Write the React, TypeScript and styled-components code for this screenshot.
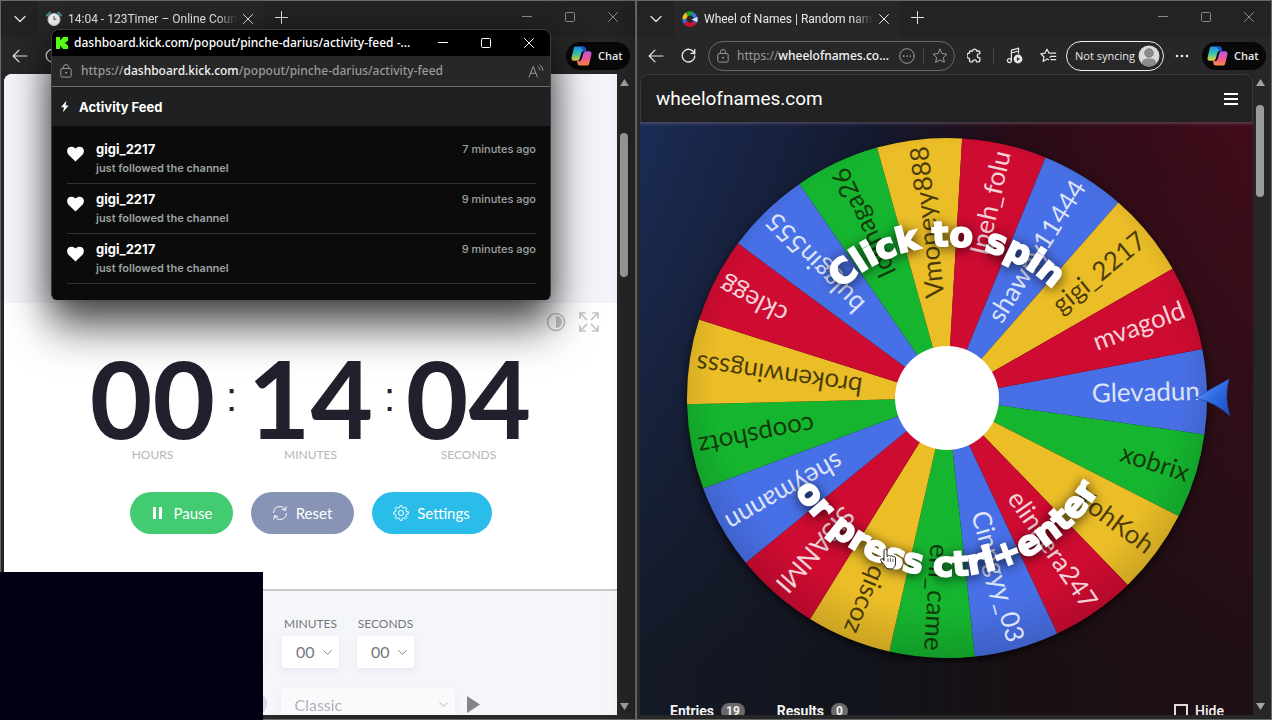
import React from 'react';
import styled, { createGlobalStyle, css } from 'styled-components';

const UI = `"Open Sans", "Noto Sans", sans-serif`;
const WIDE = `"Noto Sans", "Open Sans", sans-serif`;
const ROUND = `Lato, "Open Sans", sans-serif`;

const Global = createGlobalStyle`
  *, *::before, *::after { box-sizing: border-box; }
  html, body, #root { height: 100%; }
  body { margin: 0; overflow: hidden; background: #1b1b1b; font-family: ${UI}; }
  button, input, select { font: inherit; color: inherit; }
  button { border: 0; padding: 0; background: none; cursor: pointer; }
  h1, h2, p, ul { margin: 0; padding: 0; }
  svg { display: block; flex: none; }
`;

/* ---------- desktop and browser windows ---------- */

const Desktop = styled.main`
  position: relative;
  display: grid;
  grid-template-columns: 1fr 1fr;
  height: 100vh;
  overflow: hidden;
`;

const Window = styled.section`
  position: relative;
  display: flex;
  flex-direction: column;
  min-width: 0;
  min-height: 0;
  padding: 0 4px 4px 3px;
  border: 1px solid #666b69;
  background: #272727;
  box-shadow: 0 0 24px rgba(0, 0, 0, 0.35);
  color: #e8e8e8;
`;

const TabStrip = styled.header`
  display: flex;
  flex: none;
  height: 36px;
  margin: 0 -3px;
  background: #232323;
`;

const TabMenu = styled.button`
  display: grid;
  place-items: center;
  width: 37px;
`;

const Tab = styled.div`
  display: flex;
  align-items: center;
  gap: 6px;
  width: 225px;
  padding: 0 10px 0 8px;
  background: #272727;
  font: 400 12px/16px Roboto, sans-serif;
`;

const TabTitle = styled.span`
  flex: 1;
  overflow: hidden;
  white-space: nowrap;
  mask-image: linear-gradient(to right, #000 88%, transparent);
`;

const IconButton = styled.button<{ $w?: number }>`
  display: grid;
  place-items: center;
  flex: none;
  width: ${(p) => p.$w ?? 32}px;
  height: 32px;
`;

const WindowButtons = styled.div<{ $bright?: boolean }>`
  display: flex;
  margin-left: auto;
  color: ${(p) => (p.$bright ? '#ffffff' : '#8b8b8b')};
`;

const Toolbar = styled.nav`
  display: flex;
  align-items: center;
  flex: none;
  height: 37px;
  padding-right: 1px;
`;

const Address = styled.div`
  display: flex;
  align-items: center;
  flex: 1;
  gap: 8px;
  min-width: 0;
  height: 30px;
  margin: 0 4px;
  padding: 0 6px 0 8px;
  border: 1px solid #6a6a6a;
  border-radius: 15px;
  color: #9a9a9a;
  font: 400 12px/18px ${WIDE};
`;

const Url = styled.span`
  flex: 1;
  overflow: hidden;
  white-space: nowrap;
  b { color: #f4f4f4; font-weight: 500; }
`;

const Divider = styled.span<{ $gap?: number }>`
  width: 1px;
  height: 16px;
  margin: 0 ${(p) => p.$gap ?? 0}px;
  background: #484848;
`;

const Spacer = styled.span`
  flex: 1;
`;

const SyncButton = styled.button`
  display: flex;
  align-items: center;
  justify-content: space-between;
  width: 98px;
  height: 30px;
  margin: 0 2px;
  padding: 0 3px 0 8px;
  border: 1px solid #f0f0f0;
  border-radius: 15px;
  font-size: 11px;
  font-weight: 500;
  white-space: nowrap;
`;

const ChatButton = styled.button`
  display: flex;
  align-items: center;
  gap: 6px;
  width: 64px;
  height: 28px;
  margin-left: 4px;
  padding-left: 5px;
  border-radius: 14px;
  background: #080808;
  font-size: 11px;
  font-weight: 600;
`;

const Page = styled.div`
  display: flex;
  flex: 1;
  min-height: 0;
  border-radius: 8px 8px 0 0;
  overflow: hidden;
`;

const View = styled.div<{ $light?: boolean }>`
  flex: 1;
  min-width: 0;
  overflow: hidden;
  background: ${(p) => (p.$light ? '#f4f6fa' : '#222222')};
`;

const ScrollTrack = styled.div`
  display: flex;
  flex-direction: column;
  align-items: center;
  flex: none;
  width: 14px;
  padding: 5px 0;
  background: #262626;
`;

const ScrollThumb = styled.div<{ $before: number; $size: number }>`
  width: 8px;
  height: ${(p) => p.$size}px;
  margin-top: ${(p) => p.$before}px;
  margin-bottom: auto;
  border-radius: 4px;
  background: #9c9c9c;
`;

/* ---------- countdown page ---------- */

const Banner = styled.div`
  height: 229px;
  background: #f4f5fa;
`;

const Card = styled.section`
  padding: 8px 0 55px;
  background: #ffffff;
  border-bottom: 2px solid #c9ccd0;
  font-family: ${ROUND};
`;

const CardTools = styled.div`
  display: flex;
  justify-content: flex-end;
  gap: 12px;
  padding-right: 18px;
  color: #c4c4c8;
`;

const ToolButton = styled.button`
  display: grid;
  place-items: center;
  width: 21px;
  height: 21px;
`;

const Clock = styled.div`
  display: grid;
  grid-template-columns: 130px 28px 130px 28px 130px;
  justify-content: center;
  margin-top: 22px;
`;

const Unit = styled.div`
  display: flex;
  flex-direction: column;
  align-items: center;
  gap: 7px;
`;

const Digits = styled.span`
  color: #23202e;
  font-size: 108px;
  font-weight: 700;
  line-height: 86px;
`;

const UnitName = styled.span`
  color: #b5b5b8;
  font-size: 12px;
  line-height: 16px;
`;

const Colon = styled.span`
  color: #23202e;
  font-family: "Liberation Sans", sans-serif;
  font-size: 40px;
  line-height: 86px;
  text-align: center;
`;

const Actions = styled.div`
  display: flex;
  justify-content: center;
  gap: 18px;
  margin-top: 29px;
`;

const Pill = styled.button<{ $bg: string; $wide?: boolean }>`
  display: flex;
  align-items: center;
  justify-content: center;
  gap: 8px;
  width: ${(p) => (p.$wide ? 120 : 103)}px;
  height: 42px;
  border-radius: 21px;
  background: ${(p) => p.$bg};
  color: #ffffff;
  font-size: 15px;
`;

const Options = styled.form`
  display: flex;
  flex-direction: column;
  align-items: center;
  gap: 20px;
  padding-top: 25px;
  color: #77777c;
  font-family: ${ROUND};
`;

const Fields = styled.div`
  display: flex;
  gap: 18px;
`;

const Field = styled.label`
  display: flex;
  flex-direction: column;
  align-items: center;
  gap: 4px;
  width: 57px;
  font-size: 12px;
  line-height: 16px;
`;

const SelectBox = styled.span<{ $faded?: boolean }>`
  display: grid;
  align-items: center;
  width: 100%;
  height: 32px;
  border-radius: 4px;
  background: #ffffff;
  box-shadow: 0 2px 8px rgba(30, 40, 80, 0.07);
  opacity: ${(p) => (p.$faded ? 0.55 : 1)};
  select, svg { grid-area: 1 / 1; }
  select {
    width: 100%;
    height: 32px;
    padding: 0 0 0 14px;
    border: 0;
    appearance: none;
    background: transparent;
    font-size: 16px;
  }
  svg { justify-self: end; margin-right: 7px; pointer-events: none; }
`;

const SoundRow = styled.div`
  display: flex;
  align-items: center;
  gap: 12px;
  width: 338px;
`;

const SoundToggle = styled.input`
  flex: none;
  width: 24px;
  height: 24px;
  margin: 0 2px 0 auto;
  border-radius: 50%;
  appearance: none;
  background: #d9d9ea;
`;

const SoundChoice = styled.div`
  width: 174px;
`;

/* ---------- activity pop-up ---------- */

const Popup = styled.section`
  position: absolute;
  top: 29px;
  left: 51px;
  z-index: 2;
  width: 500px;
  height: 271px;
  border: 1px solid #3c3c3c;
  border-bottom-color: #0b0b0b;
  border-radius: 8px 8px 6px 6px;
  overflow: hidden;
  background: #0b0b0b;
  box-shadow: 0 28px 44px rgba(0, 0, 0, 0.6), 0 6px 32px rgba(0, 0, 0, 0.4);
  color: #ffffff;
`;

const bar = css`
  display: flex;
  align-items: center;
`;

const PopupTitle = styled.header`
  ${bar}
  height: 26px;
  padding-left: 4px;
  gap: 6px;
  background: #000000;
  font: 500 12px/18px ${WIDE};
  white-space: nowrap;
`;

const PopupAddress = styled.div`
  ${bar}
  gap: 9px;
  height: 31px;
  padding: 0 6px 0 8px;
  border-bottom: 1px solid #6b6b6b;
  background: #272727;
  color: #9a9a9a;
  font: 500 12px/18px ${WIDE};
`;

const FeedTitle = styled.h2`
  ${bar}
  gap: 9px;
  height: 39px;
  padding-left: 8px;
  background: #1e2021;
  font: 700 13px/16px Inter, sans-serif;
`;

const Feed = styled.ul`
  padding: 8px 14px 8px 15px;
  list-style: none;
  font-family: Inter, sans-serif;
`;

const FeedItem = styled.li`
  display: grid;
  grid-template-columns: 17px 1fr auto;
  column-gap: 12px;
  height: 50px;
  padding-top: 6px;
  border-bottom: 1px solid #303234;
  svg { margin-top: 6px; }
`;

const Name = styled.strong`
  display: block;
  font-size: 13px;
  line-height: 18px;
`;

const Note = styled.span`
  display: block;
  color: #9da3a3;
  font-size: 11px;
  font-weight: 600;
  line-height: 20px;
`;

const Time = styled.time`
  color: #9da3a3;
  font-size: 11px;
  font-weight: 500;
  line-height: 18px;
`;

const CameraCover = styled.div`
  position: absolute;
  left: 0;
  bottom: 0;
  z-index: 3;
  width: 263px;
  height: 148px;
  background: #020012;
`;

/* ---------- wheel page ---------- */

const SiteBar = styled.header`
  display: flex;
  align-items: center;
  justify-content: space-between;
  height: 48px;
  padding: 0 14px 0 15px;
  border: 1px solid #3a3a3a;
  border-bottom: 0;
  border-radius: 8px 8px 0 0;
  background: #222222;
  font-family: Roboto, sans-serif;
  h1 { font-size: 19px; font-weight: 400; color: #ffffff; }
`;

const Stage = styled.section`
  display: flex;
  flex-direction: column;
  align-items: center;
  min-height: 640px;
  padding-top: 11px;
  background:
    linear-gradient(to bottom, rgba(130, 110, 130, 0.45), transparent 4px),
    linear-gradient(to bottom, transparent, rgba(17, 17, 18, 0.7) 85%),
    linear-gradient(to right, #1b2c56, #14182c 40%, #2a0c16 62%, #420b1a);
`;

const Tabs = styled.div`
  display: flex;
  align-items: center;
  align-self: stretch;
  gap: 32px;
  margin-top: 38px;
  padding: 0 29px 0 30px;
  color: #f2f2f2;
  font: 700 14px/20px Roboto, sans-serif;
`;

const TabLink = styled.button`
  display: flex;
  align-items: center;
  gap: 7px;
`;

const Count = styled.span`
  min-width: 17px;
  padding: 0 5px;
  border-radius: 8px;
  background: #6a6a6a;
  font-size: 12px;
  line-height: 16px;
`;

const HideBox = styled.label`
  display: flex;
  align-items: center;
  gap: 7px;
  margin-left: auto;
  font-weight: 500;
  input {
    width: 14px;
    height: 14px;
    margin: 0;
    border: 2px solid #dddddd;
    appearance: none;
  }
`;

const Label = styled.text<{ $dark: boolean }>`
  fill: ${(p) => (p.$dark ? 'rgba(20, 18, 0, 0.75)' : 'rgba(255, 255, 255, 0.82)')};
  font: 400 26px ${ROUND};
  text-anchor: end;
`;

const Prompt = styled.text`
  fill: #ffffff;
  stroke: #ffffff;
  stroke-width: 2px;
  font: 700 34px "DejaVu Sans", sans-serif;
  text-anchor: middle;
  filter: drop-shadow(0 2px 6px rgba(0, 0, 0, 0.75));
`;

/* ---------- icons ---------- */

const stroke = { fill: 'none', stroke: 'currentColor', strokeLinecap: 'round', strokeLinejoin: 'round' } as const;

const Chevron = ({ size = 12 }: { size?: number }) => (
  <svg width={size} height={size} viewBox="0 0 12 12" {...stroke} strokeWidth="1.2"><path d="M1 3.5l5 5 5-5" /></svg>
);
const Cross = () => (
  <svg width="10" height="10" viewBox="0 0 10 10" {...stroke}><path d="M.5.5l9 9M9.5.5l-9 9" /></svg>
);
const Plus = () => (
  <svg width="13" height="13" viewBox="0 0 13 13" {...stroke}><path d="M6.5.5v12M.5 6.5h12" /></svg>
);
const Dash = () => (
  <svg width="10" height="10" viewBox="0 0 10 10" {...stroke}><path d="M0 4.5h10" /></svg>
);
const Square = () => (
  <svg width="10" height="10" viewBox="0 0 10 10" {...stroke}><rect x=".5" y=".5" width="9" height="9" rx="1" /></svg>
);
const Back = () => (
  <svg width="16" height="14" viewBox="0 0 16 14" {...stroke} strokeWidth="1.2"><path d="M15 7H1.5M7 1.2L1.2 7 7 12.8" /></svg>
);
const Reload = () => (
  <svg width="15" height="15" viewBox="0 0 15 15" {...stroke} strokeWidth="1.3"><path d="M13.6 6A6.3 6.3 0 1 0 13.8 8M13.8 1.5V5.4H10" /></svg>
);
const Lock = () => (
  <svg width="12" height="14" viewBox="0 0 12 14" {...stroke}>
    <rect x=".8" y="4.5" width="10.4" height="8.6" rx="1.5" /><path d="M3.4 4.5V3.2a2.6 2.6 0 0 1 5.2 0v1.3" /><circle cx="6" cy="8.8" r=".6" />
  </svg>
);
const DotsCircle = () => (
  <svg width="16" height="16" viewBox="0 0 16 16" {...stroke}>
    <circle cx="8" cy="8" r="7.3" /><path d="M4.6 8h.1M8 8h.1M11.3 8h.1" strokeWidth="1.7" />
  </svg>
);
const Star = () => (
  <svg width="16" height="16" viewBox="0 0 16 16" {...stroke}><path d="M8 1.2l2.1 4.4 4.8.6-3.5 3.3.9 4.8L8 12l-4.3 2.3.9-4.8L1.1 6.2l4.800-.6z" /></svg>
);
const Puzzle = () => (
  <svg width="16" height="16" viewBox="0 0 16 16" {...stroke} strokeWidth="1.3">
    <path d="M3.500 3h2.200a1.900 1.900 0 0 1 3.800 0h2.300a1 1 0 0 1 1 1v1.700h-.4a2 2 0 0 0 0 4.100h.4v3a1 1 0 0 1-1 1H9.500a1.900 1.900 0 0 0-3.800 0H3.500a1 1 0 0 1-1-1v-2.400a1.900 1.900 0 0 1 0-5.200V4a1 1 0 0 1 1-1z" />
  </svg>
);
const Music = () => (
  <svg width="17" height="17" viewBox="0 0 17 17" {...stroke} strokeWidth="1.2">
    <path d="M5.4 13.4V3.2L12.6 1.2v5M5.4 6l7.2-2" /><circle cx="3.4" cy="13.6" r="2" />
    <circle cx="12" cy="12" r="4.4" fill="currentColor" stroke="none" /><path d="M10.9 10v4l3.1-2z" fill="#272727" stroke="none" />
  </svg>
);
const Favorites = () => (
  <svg width="17" height="16" viewBox="0 0 17 16" {...stroke} strokeWidth="1.2">
    <path d="M8.600 11.800L7 11l-3.900 2.400.8-4.600L.8 5.800l4.200-.6L7 1.200l2 4h6.700M11 8.400h4.700M11 11.600h4.700M11 8.400l-1 .9" />
  </svg>
);
const Avatar = () => (
  <svg width="22" height="22" viewBox="0 0 22 22">
    <circle cx="11" cy="11" r="10.5" fill="#d8d8d8" /><circle cx="11" cy="8" r="4.2" fill="#8c8c8c" stroke="#777" />
    <path d="M3.6 18.4C4 14.6 6.6 13.4 11 13.4s7 1.2 7.4 5A10.5 10.5 0 0 1 3.6 18.4z" fill="#8c8c8c" />
  </svg>
);
const Dots = () => (
  <svg width="14" height="4" viewBox="0 0 14 4" fill="currentColor"><circle cx="2" cy="2" r="1.3" /><circle cx="7" cy="2" r="1.3" /><circle cx="12" cy="2" r="1.3" /></svg>
);
const Copilot = () => (
  <svg width="21" height="20" viewBox="0 0 21 20">
    <defs>
      <linearGradient id="cpA" x1="0" y1="0" x2="0" y2="1"><stop offset="0" stopColor="#1f8fe8" /><stop offset=".5" stopColor="#33c4b4" /><stop offset="1" stopColor="#f0d02c" /></linearGradient>
      <linearGradient id="cpB" x1="0" y1="0" x2="0" y2="1"><stop offset="0" stopColor="#b45ae8" /><stop offset=".5" stopColor="#f0569c" /><stop offset="1" stopColor="#fb8a3c" /></linearGradient>
    </defs>
    <path d="M4.6.6h7.6c1.4 0 2 .8 2.3 2L15 5h-2.2c-1.4 0-2 .7-2.4 2l-1.7 5.8c-.4 1.2-1.2 1.9-2.5 1.9H2.8c-1.8 0-2.7-1.3-2.2-3.2l2-8.6C2.900 1.400 3.600.6 4.6.6z" fill="url(#cpA)" />
    <path d="M9.400.6h2.800c1.400 0 2 .8 2.300 2L15 5h-2.400z" fill="#1b50d8" />
    <path d="M16.400 19.400H8.800c-1.400 0-2-.8-2.300-2L6 15h2.200c1.400 0 2-.7 2.400-2l1.700-5.800c.4-1.200 1.200-1.900 2.500-1.900h3.400c1.800 0 2.700 1.300 2.200 3.200l-2 8.600c-.3 1.500-1 2.300-2 2.300z" fill="url(#cpB)" />
  </svg>
);
const AlarmClock = () => (
  <svg width="16" height="16" viewBox="0 0 16 16">
    <path d="M1 4.500L4 1.500M15 4.500L12 1.500" stroke="#3f8fa0" strokeWidth="2" strokeLinecap="round" />
    <circle cx="8" cy="8.600" r="6" fill="#f2f2f2" stroke="#c9c9c9" /><path d="M8 5v3.800l2.300-1" stroke="#555" fill="none" />
  </svg>
);
const MiniWheel = () => (
  <svg width="16" height="16" viewBox="0 0 16 16" fill="none" strokeWidth="4">
    <path d="M2.400 8A5.600 5.600 0 0 1 5 3.300" stroke="#eebf22" /><path d="M5 3.300A5.600 5.600 0 0 1 10.500 3" stroke="#18a82f" />
    <path d="M10.500 3A5.600 5.600 0 0 1 12.500 11.500" stroke="#3f6fe6" /><path d="M12.500 11.500A5.600 5.600 0 0 1 3.500 11.500" stroke="#d3102c" />
    <path d="M3.500 11.500A5.600 5.600 0 0 1 2.400 8" stroke="#3f6fe6" /><path d="M9.500 8.500l6-2.500v5z" fill="#dfe6fa" />
  </svg>
);
const KickLogo = () => (
  <svg width="12" height="12" viewBox="0 0 12 12"><path d="M0 0h4v2.700h1.300V1.300h1.400V0H12v4h-1.300v1.300H9.300v1.400h1.400V8H12v4H6.700v-1.300H5.300V9.300H4V12H0z" fill="#53fc18" /></svg>
);
const ReadAloud = () => (
  <svg width="16" height="15" viewBox="0 0 16 15" {...stroke}><path d="M1 13L5.200 2.500 9.400 13M2.500 9.300h5.400M10 2.500a4 4 0 0 1 2 3.500M12 .800a6.500 6.500 0 0 1 3 5.400" /></svg>
);
const Bolt = () => (
  <svg width="10" height="13" viewBox="0 0 10 13"><path d="M6.400.8L1 7.200h3L3 12.200l5.600-6.600H5.600z" fill="#fff" /></svg>
);
const Heart = () => (
  <svg width="17" height="16" viewBox="0 0 17 16"><path d="M8.500 15.600L1.300 8.400C-.3 6.600-.2 3.400 1.400 1.800 3.200.2 6.300.1 8.500 2.600 10.700.1 13.800.2 15.600 1.800c1.600 1.600 1.700 4.800.1 6.600z" fill="#fff" /></svg>
);
const Contrast = () => (
  <svg width="20" height="20" viewBox="0 0 20 20"><circle cx="10" cy="10" r="8.500" fill="none" stroke="currentColor" strokeWidth="1.600" /><path d="M10 4a6 6 0 0 1 0 12z" fill="currentColor" /></svg>
);
const Expand = () => (
  <svg width="20" height="20" viewBox="0 0 20 20" {...stroke} strokeWidth="1.700"><path d="M1 6V1h5M1 1l6.500 6.500M14 1h5v5M19 1l-6.500 6.500M19 14v5h-5M19 19l-6.500-6.500M6 19H1v-5M1 19l6.500-6.500" /></svg>
);
const PauseBars = () => (
  <svg width="16" height="12" viewBox="0 0 16 12" fill="#fff"><rect x="3" width="3" height="12" /><rect x="9" width="3" height="12" /></svg>
);
const Cycle = () => (
  <svg width="16" height="16" viewBox="0 0 16 16" {...stroke}><path d="M1.500 7.500A6.300 6.300 0 0 1 13.400 5M14.200 1.800L13.600 5.200 10.300 4.600M14.500 8.500A6.300 6.300 0 0 1 2.600 11M1.800 14.200l.6-3.400 3.300.6" /></svg>
);
const teeth = Array.from({ length: 16 }, (_, i) => {
  const r = i % 2 ? 5.6 : 7.4;
  return [-0.13, 0.13].map((d) => {
    const a = (i * Math.PI) / 8 + d;
    return `${(8 + r * Math.cos(a)).toFixed(2)} ${(8 + r * Math.sin(a)).toFixed(2)}`;
  }).join('L');
}).join('L');
const Gear = () => (
  <svg width="16" height="16" viewBox="0 0 16 16" {...stroke}><path d={`M${teeth}z`} /><circle cx="8" cy="8" r="2.600" /></svg>
);
const Play = () => (
  <svg width="13" height="17" viewBox="0 0 13 17"><path d="M0 0l13 8.500L0 17z" fill="#85858a" /></svg>
);
const ScrollArrow = ({ down }: { down?: boolean }) => (
  <svg width="9" height="7" viewBox="0 0 9 7"><path d={down ? 'M0 0h9L4.500 7z' : 'M0 7h9L4.500 0z'} fill="#a3a3a3" /></svg>
);
const MenuBars = () => (
  <svg width="14" height="12" viewBox="0 0 14 12" fill="#fff"><rect width="14" height="2" /><rect y="5" width="14" height="2" /><rect y="10" width="14" height="2" /></svg>
);

/* ---------- wheel ---------- */

const BLUE = '#4870e6';
const GREEN = '#15b52f';
const YELLOW = '#ebbd27';
const RED = '#ce0b31';
const cycle = [BLUE, GREEN, YELLOW, RED];
const names = [
  'Glevadun', 'xobrix', 'KohKoh', 'elinbera247', 'Cinngyy_03', 'eni_came', 'qiscoz', 'SISANMI', 'sheymannn', 'coopshotz',
  'brokenwingsss', 'cklegg', 'bulggin555', 'lolinaga26', 'Vmoneyy888', 'Ipeh_folu', 'shawny11444', 'gigi_2217', 'mvagold',
];
const colourOf = (i: number) => (i === 17 ? YELLOW : i === 18 ? RED : cycle[i % 4]);
const STEP = 360 / names.length;
const START = -1.4;
const R = 260;

const point = (deg: number) => {
  const a = (deg * Math.PI) / 180;
  return `${(R * Math.cos(a)).toFixed(2)} ${(R * Math.sin(a)).toFixed(2)}`;
};

const Rim = styled.circle`
  filter: drop-shadow(0 3px 4px rgba(0, 0, 0, 0.7));
`;

const Wheel = () => (
  <svg width="580" height="530" viewBox="-290 -265 580 530" role="img" aria-label="Wheel of names">
    <defs>
      <radialGradient id="shade" gradientUnits="userSpaceOnUse" cx="0" cy="-20" r="290">
        <stop offset=".8" stopColor="#000" stopOpacity="0" /><stop offset="1" stopColor="#000" stopOpacity=".17" />
      </radialGradient>
      <linearGradient id="pointer" x1="0" y1="0" x2="1" y2="1"><stop offset="0" stopColor="#6fa2ff" /><stop offset=".5" stopColor="#2f6be4" /><stop offset="1" stopColor="#1b49bd" /></linearGradient>
      <path id="arcTop" d="M-152 0A152 152 0 0 1 152 0" />
      <path id="arcBottom" d="M-178 0A178 178 0 0 0 178 0" />
    </defs>
    <Rim r="260" fill="#111" />
    {names.map((name, i) => {
      const mid = START + i * STEP;
      return <path key={name} d={`M0 0L${point(mid - STEP / 2)}A${R} ${R} 0 0 1 ${point(mid + STEP / 2)}z`} fill={colourOf(i)} />;
    })}
    <circle r="260" fill="url(#shade)" />
    {names.map((name, i) => {
      const c = colourOf(i);
      return (
        <g key={name} transform={`rotate(${START + i * STEP})`}>
          <Label x="253" y="8" $dark={c === GREEN || c === YELLOW}>{name}</Label>
        </g>
      );
    })}
    <circle r="52" fill="#fff" />
    <Prompt><textPath href="#arcTop" startOffset="50%">Click to spin</textPath></Prompt>
    <Prompt><textPath href="#arcBottom" startOffset="50%">or press ctrl+enter</textPath></Prompt>
    <path d="M248 0L282 -19Q277 0 283 18Q268 4 248 0z" fill="url(#pointer)" stroke="#1c3f9c" strokeWidth=".6" />
    <g transform="translate(-67 151)">
      <path d="M4 1.500c0-1.800 3-1.800 3 0v6l1-.3c.5-1.300 2.300-1 2.600.2.700-1 2.300-.8 2.600.5.900-.7 2.300-.2 2.300 1.200v4.500c0 4-1.500 6.400-5.400 6.400-3.200 0-4.400-1.300-5.800-4L.7 11.500c-.7-1.500 1-2.600 2.100-1.300L4 11.600z" fill="#fff" stroke="#222" strokeWidth="1" />
      <path d="M8 9v4M10.500 9v4M13 10v3" stroke="#222" strokeWidth=".7" />
    </g>
  </svg>
);

/* ---------- assembled parts ---------- */

const Controls = ({ bright }: { bright?: boolean }) => (
  <WindowButtons $bright={bright}>
    <IconButton $w={43} aria-label="Minimize"><Dash /></IconButton>
    <IconButton $w={43} aria-label="Maximize"><Square /></IconButton>
    <IconButton $w={43} aria-label="Close"><Cross /></IconButton>
  </WindowButtons>
);

const Strip = ({ icon, title }: { icon: React.ReactNode; title: string }) => (
  <TabStrip>
    <TabMenu aria-label="Tab menu"><Chevron /></TabMenu>
    <Tab>{icon}<TabTitle>{title}</TabTitle><button aria-label="Close tab"><Cross /></button></Tab>
    <IconButton $w={36} aria-label="New tab"><Plus /></IconButton>
    <Controls />
  </TabStrip>
);

const Scroll = ({ before, size }: { before: number; size: number }) => (
  <ScrollTrack><ScrollArrow /><ScrollThumb $before={before} $size={size} /><ScrollArrow down /></ScrollTrack>
);

const NumberField = ({ label }: { label: string }) => (
  <Field>
    {label}
    <SelectBox><select defaultValue="00"><option>00</option></select><Chevron size={9} /></SelectBox>
  </Field>
);

const feed = ['7 minutes ago', '9 minutes ago', '9 minutes ago'];

export default function App() {
  return (
    <>
      <Global />
      <Desktop>
        <Window>
          <Strip icon={<AlarmClock />} title="14:04 - 123Timer – Online Countdown" />
          <Toolbar>
            <IconButton aria-label="Back"><Back /></IconButton>
            <IconButton aria-label="Reload"><Reload /></IconButton>
            <Spacer />
            <ChatButton><Copilot />Chat</ChatButton>
          </Toolbar>
          <Page>
            <View $light>
              <Banner />
              <Card>
                <CardTools>
                  <ToolButton aria-label="Contrast"><Contrast /></ToolButton>
                  <ToolButton aria-label="Full screen"><Expand /></ToolButton>
                </CardTools>
                <Clock>
                  <Unit><Digits>00</Digits><UnitName>HOURS</UnitName></Unit>
                  <Colon>:</Colon>
                  <Unit><Digits>14</Digits><UnitName>MINUTES</UnitName></Unit>
                  <Colon>:</Colon>
                  <Unit><Digits>04</Digits><UnitName>SECONDS</UnitName></Unit>
                </Clock>
                <Actions>
                  <Pill $bg="#42cb71"><PauseBars />Pause</Pill>
                  <Pill $bg="#8794b6"><Cycle />Reset</Pill>
                  <Pill $bg="#2bbdea" $wide><Gear />Settings</Pill>
                </Actions>
              </Card>
              <Options>
                <Fields>
                  <NumberField label="HOURS" />
                  <NumberField label="MINUTES" />
                  <NumberField label="SECONDS" />
                </Fields>
                <SoundRow>
                  <SoundToggle type="checkbox" aria-label="Sound" />
                  <SoundChoice>
                    <SelectBox $faded>
                      <select aria-label="Alarm sound" defaultValue="Classic"><option>Classic</option></select>
                      <Chevron size={9} />
                    </SelectBox>
                  </SoundChoice>
                  <button type="button" aria-label="Play sound"><Play /></button>
                </SoundRow>
              </Options>
            </View>
            <Scroll before={47} size={144} />
          </Page>
        </Window>

        <Window>
          <Strip icon={<MiniWheel />} title="Wheel of Names | Random name picker" />
          <Toolbar>
            <IconButton aria-label="Back"><Back /></IconButton>
            <IconButton aria-label="Reload"><Reload /></IconButton>
            <Address>
              <Lock />
              <Url>https://<b>wheelofnames.co...</b></Url>
              <DotsCircle /><Divider /><Star />
            </Address>
            <IconButton aria-label="Extensions"><Puzzle /></IconButton>
            <Divider $gap={2} />
            <IconButton $w={36} aria-label="Media"><Music /></IconButton>
            <IconButton aria-label="Favorites"><Favorites /></IconButton>
            <SyncButton>Not syncing<Avatar /></SyncButton>
            <IconButton aria-label="More"><Dots /></IconButton>
            <ChatButton><Copilot />Chat</ChatButton>
          </Toolbar>
          <Page>
            <View>
              <SiteBar><h1>wheelofnames.com</h1><button aria-label="Menu"><MenuBars /></button></SiteBar>
              <Stage>
                <Wheel />
                <Tabs>
                  <TabLink>Entries<Count>19</Count></TabLink>
                  <TabLink>Results<Count>0</Count></TabLink>
                  <HideBox><input type="checkbox" />Hide</HideBox>
                </Tabs>
              </Stage>
            </View>
            <Scroll before={19} size={92} />
          </Page>
        </Window>

        <Popup>
          <PopupTitle>
            <KickLogo />dashboard.kick.com/popout/pinche-darius/activity-feed -...
            <Controls bright />
          </PopupTitle>
          <PopupAddress>
            <Lock />
            <Url>https://<b>dashboard.kick.com</b>/popout/pinche-darius/activity-feed</Url>
            <ReadAloud />
          </PopupAddress>
          <FeedTitle><Bolt />Activity Feed</FeedTitle>
          <Feed>
            {feed.map((time, i) => (
              <FeedItem key={i}>
                <Heart />
                <div><Name>gigi_2217</Name><Note>just followed the channel</Note></div>
                <Time>{time}</Time>
              </FeedItem>
            ))}
          </Feed>
        </Popup>
        <CameraCover />
      </Desktop>
    </>
  );
}
